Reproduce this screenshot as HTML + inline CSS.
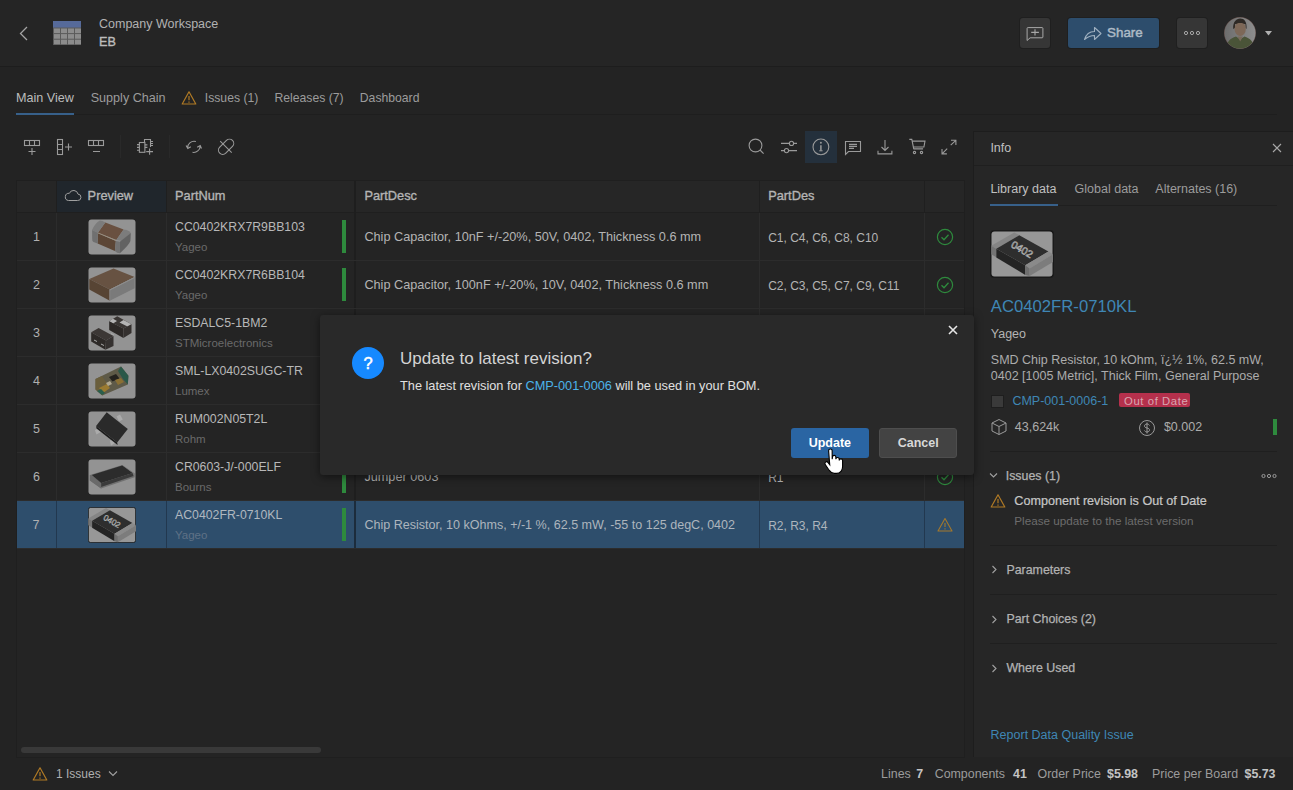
<!DOCTYPE html>
<html><head><meta charset="utf-8"><style>
html,body{margin:0;padding:0;}
body{width:1293px;height:790px;position:relative;overflow:hidden;background:#232323;font-family:"Liberation Sans",sans-serif;}
.t{position:absolute;line-height:1;white-space:nowrap;}
.r{position:absolute;}
</style></head><body>
<div class="r" style="left:0px;top:0px;width:1293px;height:66px;background:#252525;"></div>
<div class="r" style="left:0px;top:66px;width:1293px;height:1px;background:#1d1d1d;"></div>
<svg class="r" style="left:18px;top:25px" width="12" height="17"><polyline points="9,2 2.5,8.5 9,15" fill="none" stroke="#a4a4a4" stroke-width="1.3"/></svg>
<svg class="r" style="left:53px;top:21px" width="28" height="24"><rect x="0" y="0" width="28" height="24" fill="#5a5a5a"/><rect x="0" y="0" width="28" height="6.5" fill="#566a9a"/><rect x="1" y="7.5" width="6" height="4.6" fill="#8c8c8c"/><rect x="1" y="13.1" width="6" height="4.6" fill="#8c8c8c"/><rect x="1" y="18.7" width="6" height="4.6" fill="#8c8c8c"/><rect x="8" y="7.5" width="6" height="4.6" fill="#8c8c8c"/><rect x="8" y="13.1" width="6" height="4.6" fill="#8c8c8c"/><rect x="8" y="18.7" width="6" height="4.6" fill="#8c8c8c"/><rect x="15" y="7.5" width="6" height="4.6" fill="#8c8c8c"/><rect x="15" y="13.1" width="6" height="4.6" fill="#8c8c8c"/><rect x="15" y="18.7" width="6" height="4.6" fill="#8c8c8c"/><rect x="22" y="7.5" width="6" height="4.6" fill="#8c8c8c"/><rect x="22" y="13.1" width="6" height="4.6" fill="#8c8c8c"/><rect x="22" y="18.7" width="6" height="4.6" fill="#8c8c8c"/></svg>
<div class="t " style="left:99px;top:18.42px;font-size:12.5px;color:#b2b2b2;font-weight:normal;">Company Workspace</div>
<div class="t " style="left:99px;top:36.33px;font-size:12.6px;color:#bcbcbc;font-weight:normal;-webkit-text-stroke:0.4px #bcbcbc;">EB</div>
<div class="r" style="left:1020px;top:18px;width:30px;height:30px;background:#363636;border-radius:3px;box-shadow:0 0 0 1px #1f1f1f;"></div>
<svg class="r" style="left:1020px;top:18px" width="30" height="30"><path d="M8.1 9.6h14a0.8 0.8 0 0 1 0.8 0.8v8.6a0.8 0.8 0 0 1-0.8 0.8h-12l-3 2.7v-12.1a0.8 0.8 0 0 1 0.8-0.8z" fill="none" stroke="#a8a8a8" stroke-width="1"/><path d="M15 11.3v6.3M11.2 14.4h7.7" stroke="#a8a8a8" stroke-width="1.1"/></svg>
<div class="r" style="left:1068px;top:18px;width:91px;height:30px;background:#2d4d6c;border-radius:3px;box-shadow:0 0 0 1px #1f1f1f;"></div>
<svg class="r" style="left:1082px;top:22px" width="22" height="22"><path d="M2.5 17.5c1.5-5 5-8 10-8v-4l6.5 6-6.5 6v-4c-4 0-7 1.5-10 4z" fill="none" stroke="#9fb0c0" stroke-width="1.1" stroke-linejoin="round"/></svg>
<div class="t " style="left:1107px;top:25.86px;font-size:13.4px;color:#aebbc6;font-weight:normal;-webkit-text-stroke:0.45px #aebbc6;">Share</div>
<div class="r" style="left:1177px;top:18px;width:30px;height:30px;background:#363636;border-radius:3px;box-shadow:0 0 0 1px #1f1f1f;"></div>
<svg class="r" style="left:1177px;top:18px" width="30" height="30"><circle cx="9" cy="15" r="1.6" fill="none" stroke="#a8a8a8" stroke-width="1"/><circle cx="15" cy="15" r="1.6" fill="none" stroke="#a8a8a8" stroke-width="1"/><circle cx="21" cy="15" r="1.6" fill="none" stroke="#a8a8a8" stroke-width="1"/></svg>
<svg class="r" style="left:1224px;top:17px" width="32" height="32"><defs><linearGradient id="av" x1="0" y1="0" x2="1" y2="0"><stop offset="0" stop-color="#6c6c6c"/><stop offset="1" stop-color="#8e8e8e"/></linearGradient><clipPath id="avc"><circle cx="16" cy="16" r="15.5"/></clipPath></defs><circle cx="16" cy="16" r="16" fill="#5e4a46"/><g clip-path="url(#avc)"><rect width="32" height="32" fill="url(#av)"/><path d="M9.2 12c-0.5-7 3-10.5 7-10.5s7 3 6.3 10.5l-1-1v-4h-10.5v4z" fill="#2e2a26"/><ellipse cx="16.2" cy="11.9" rx="5.6" ry="7.2" fill="#7d6858"/><path d="M10.8 7.5c1-3 3-4 5.4-4s4.6 1 5.4 4c-1.5-1-3-1.5-5.4-1.5s-4 0.5-5.4 1.5z" fill="#2e2a26"/><path d="M2 33c0-7 4-12 10-13.5l4.2 3 4.2-3c6 1.5 10 6.5 10 13.5z" fill="#4a5438"/><path d="M13.5 19.5l2.7 5 2.7-5z" fill="#7a6a5a"/></g></svg>
<svg class="r" style="left:1265px;top:31px" width="8" height="5"><path d="M0 0h7l-3.5 4.5z" fill="#b0b0b0"/></svg>
<div class="r" style="left:16px;top:114px;width:1261px;height:1px;background:#1e1e1e;"></div>
<div class="t " style="left:16px;top:92.33px;font-size:12.6px;color:#bcbcbc;font-weight:normal;">Main View</div>
<div class="r" style="left:16px;top:113px;width:58px;height:2px;background:#37608a;"></div>
<div class="t " style="left:90.7px;top:92.33px;font-size:12.6px;color:#9c9c9c;font-weight:normal;">Supply Chain</div>
<svg class="r" style="left:181px;top:90px" width="16" height="16"><path d="M8 1.8L14.8 14H1.2z" fill="none" stroke="#b07a25" stroke-width="1.2" stroke-linejoin="round"/><path d="M8 6v4.2M8 11.5v1.2" stroke="#b07a25" stroke-width="1.2"/></svg>
<div class="t " style="left:204.8px;top:91.87px;font-size:12.2px;color:#9c9c9c;font-weight:normal;">Issues (1)</div>
<div class="t " style="left:274.5px;top:91.87px;font-size:12.2px;color:#9c9c9c;font-weight:normal;">Releases (7)</div>
<div class="t " style="left:359.8px;top:91.87px;font-size:12.2px;color:#9c9c9c;font-weight:normal;">Dashboard</div>
<svg class="r" style="left:0;top:130px" width="260" height="34" fill="none" stroke="#9a9a9a" stroke-width="1.1"><rect x="24.5" y="10.5" width="15" height="5"/><path d="M29.5 10.5v5M34.5 10.5v5M32 18v7M28.5 21.5h7"/><rect x="57.5" y="9.5" width="5" height="15"/><path d="M57.5 14.5h5M57.5 19.5h5M65 17h7M68.5 13.5v7"/><rect x="88.5" y="10.5" width="15" height="5"/><path d="M93.5 10.5v5M98.5 10.5v5M93 21.5h7"/><path d="M120.5 5v23M169.5 5v23" stroke="#292929"/><path d="M144.5 12.5v-3h6v7.5M150.5 11.5h2.5M150.5 13.5h2.5M150.5 15.5h2.5"/><rect x="139.4" y="12.5" width="5.5" height="9.8"/><path d="M137 14.6h2.4M137 17.4h2.4M137 20.2h2.4M144.9 14.9h2.5M144.9 17.4h2.5M146.2 21.6h6.8M149.6 18.5v6.3"/><path d="M195.9 11.5a6.5 6.5 0 0 0-8.3 6.5M186.1 15.5l1.7 3 3-1.7M192.5 22.3a6.5 6.5 0 0 0 7.7-6.3M197.2 17.2l3-1.7 1.3 3"/><rect x="217.1" y="12.55" width="18" height="8.5" rx="4.25" transform="rotate(-45 226.1 16.8)"/><path d="M220.2 11.2l11.5 11.5"/></svg>
<div class="r" style="left:805px;top:131px;width:32px;height:32px;background:#24303c;"></div>
<svg class="r" style="left:740px;top:130px" width="222" height="34" fill="none" stroke="#9a9a9a" stroke-width="1.1"><circle cx="15.5" cy="15.5" r="6.4"/><path d="M20 20l3.6 3.6"/><path d="M41 13.4h16M41 20.6h16"/><circle cx="51.5" cy="13.4" r="2.1" fill="#232323"/><circle cx="46.5" cy="20.6" r="2.1" fill="#232323"/><circle cx="80.9" cy="16.9" r="7.9"/><path d="M80.9 15.2v5.6" stroke-width="1.5"/><path d="M79.2 20.8h3.4" stroke-width="1"/><circle cx="80.9" cy="12.7" r="0.95" fill="#9a9a9a" stroke="none"/><path d="M105.5 11.5h15v10h-12l-3 3z"/><path d="M109 14.4h8M109 16.4h8M109 18.4h5"/><path d="M145 10v10.2M141.5 17l3.5 3.4 3.5-3.4M138 20.8v3.1h13.9v-3.1"/><path d="M169.3 9.4h2.5l1.9 9.3h9.4M172.2 11.1h12.8l-1.1 5.9h-10.7M173.6 19h9.3"/><circle cx="174.5" cy="22.5" r="1.15"/><circle cx="181.5" cy="22.5" r="1.15"/><path d="M210.7 15.2l5.2-4.9M211 10.3h4.9v4.6M207.2 18.7l-5.2 5.2M202 19v4.9h4.9"/></svg>
<div class="r" style="left:16px;top:180px;width:949px;height:578px;background:#242424;box-sizing:border-box;border:1px solid #1f1f1f;"></div>
<div class="r" style="left:17px;top:181px;width:947px;height:31px;background:#262626;"></div>
<div class="r" style="left:57px;top:181px;width:109px;height:31px;background:#20262c;"></div>
<div class="r" style="left:17px;top:212px;width:947px;height:1px;background:#1f1f1f;"></div>
<div class="r" style="left:56px;top:181px;width:1px;height:31px;background:#1f1f1f;"></div>
<div class="r" style="left:56px;top:213px;width:1px;height:335px;background:#2c2c2c;"></div>
<div class="r" style="left:166px;top:181px;width:1px;height:31px;background:#1f1f1f;"></div>
<div class="r" style="left:166px;top:213px;width:1px;height:335px;background:#2c2c2c;"></div>
<div class="r" style="left:759px;top:181px;width:1px;height:31px;background:#1f1f1f;"></div>
<div class="r" style="left:759px;top:213px;width:1px;height:335px;background:#2c2c2c;"></div>
<div class="r" style="left:924px;top:181px;width:1px;height:31px;background:#1f1f1f;"></div>
<div class="r" style="left:924px;top:213px;width:1px;height:335px;background:#2c2c2c;"></div>
<div class="r" style="left:354px;top:181px;width:2px;height:367px;background:#1e1e1e;"></div>
<svg class="r" style="left:64px;top:188px" width="18" height="14"><path d="M4.5 12.5h9a3.2 3.2 0 0 0 0.5-6.4a4.5 4.5 0 0 0-8.6-0.8a3.2 3.2 0 0 0-0.9 7.2z" fill="none" stroke="#a0a0a0" stroke-width="1"/></svg>
<div class="t " style="left:87.6px;top:190.16px;font-size:12.8px;color:#b4b4b4;font-weight:normal;-webkit-text-stroke:0.35px #b4b4b4;">Preview</div>
<div class="t " style="left:175px;top:190.16px;font-size:12.8px;color:#b4b4b4;font-weight:normal;-webkit-text-stroke:0.35px #b4b4b4;">PartNum</div>
<div class="t " style="left:364.4px;top:190.16px;font-size:12.8px;color:#b4b4b4;font-weight:normal;-webkit-text-stroke:0.35px #b4b4b4;">PartDesc</div>
<div class="t " style="left:768.2px;top:190.16px;font-size:12.8px;color:#b4b4b4;font-weight:normal;-webkit-text-stroke:0.35px #b4b4b4;">PartDes</div>
<div class="r" style="left:17px;top:260px;width:947px;height:1px;background:#2c2c2c;"></div>
<div class="t " style="left:33px;top:231.32px;font-size:12.5px;color:#b0b0b0;font-weight:normal;">1</div>
<svg class="r" style="left:88px;top:219px" width="48" height="36" viewBox="0 0 48 36"><rect x="0.5" y="0.5" width="47" height="35" rx="3" fill="#939393" /><path d="M17.3 3.6L35.6 10.5 28.3 21 9.8 13.7z" fill="#695040"/><path d="M9.8 14.1L27.8 21.9 26.9 31.9 9.6 24.6z" fill="#5c4636"/><path d="M9.8 13.9L28 21.4" stroke="#9a9080" stroke-width="0.9"/><path d="M11.9 1.4Q14.5 1.5 17.3 3.6L9.8 13.7 4.1 10.9Q7 4 11.9 1.4z" fill="#7c7c7c"/><path d="M4.1 10.9L9.8 13.7 9.6 24.6 5.5 23Q4 22.5 4.2 20z" fill="#707070"/><path d="M35.6 10.5L38.7 10.9Q41.5 12 42.8 14.1L34.2 21.9 28.3 21z" fill="#7c7c7c"/><path d="M27.8 21.9L31.9 22.8 31.9 34.2Q29 34 26.9 31.9z" fill="#727272"/><path d="M31.9 22.8L42.8 14.1 42.4 22Q41 26 31.9 34.2z" fill="#626262"/></svg>
<div class="t " style="left:175px;top:221.39px;font-size:12.3px;color:#b8b8b8;font-weight:normal;">CC0402KRX7R9BB103</div>
<div class="t " style="left:175px;top:241.97px;font-size:11.5px;color:#6a6a6a;font-weight:normal;">Yageo</div>
<div class="r" style="left:342px;top:220px;width:4px;height:33px;background:#2e8a3d;"></div>
<div class="t " style="left:364.4px;top:231.25px;font-size:12.7px;color:#b4b4b4;font-weight:normal;">Chip Capacitor, 10nF +/-20%, 50V, 0402, Thickness 0.6 mm</div>
<div class="t " style="left:768.2px;top:231.84px;font-size:12.0px;color:#b4b4b4;font-weight:normal;">C1, C4, C6, C8, C10</div>
<svg class="r" style="left:936px;top:228px" width="18" height="18"><circle cx="9" cy="9" r="7.6" fill="none" stroke="#2e8a3d" stroke-width="1.2"/><path d="M5.5 9.2l2.5 2.5 4.5-5" fill="none" stroke="#2e8a3d" stroke-width="1.3"/></svg>
<div class="r" style="left:17px;top:308px;width:947px;height:1px;background:#2c2c2c;"></div>
<div class="t " style="left:33px;top:279.32px;font-size:12.5px;color:#b0b0b0;font-weight:normal;">2</div>
<svg class="r" style="left:88px;top:267px" width="48" height="36" viewBox="0 0 48 36"><rect x="0.5" y="0.5" width="47" height="35" rx="3" fill="#939393" /><path d="M1.3 12L25.5 1.5 46.6 10.1 21.8 22.5z" fill="#675242"/><path d="M1.3 12L21.8 22.5 21.8 33.7 1.3 22.5z" fill="#574434"/><path d="M21.8 22.5L46.6 10.1 46.6 21.3 21.8 33.7z" fill="#7a7a7a"/><path d="M21.8 22.5L46.6 10.1 46.6 11.1 21.8 23.5z" fill="#909090"/><path d="M21.8 22.5v11.2" stroke="#8e8e8e" stroke-width="0.8"/></svg>
<div class="t " style="left:175px;top:269.39px;font-size:12.3px;color:#b8b8b8;font-weight:normal;">CC0402KRX7R6BB104</div>
<div class="t " style="left:175px;top:289.97px;font-size:11.5px;color:#6a6a6a;font-weight:normal;">Yageo</div>
<div class="r" style="left:342px;top:268px;width:4px;height:33px;background:#2e8a3d;"></div>
<div class="t " style="left:364.4px;top:279.25px;font-size:12.7px;color:#b4b4b4;font-weight:normal;">Chip Capacitor, 100nF +/-20%, 10V, 0402, Thickness 0.6 mm</div>
<div class="t " style="left:768.2px;top:279.84px;font-size:12.0px;color:#b4b4b4;font-weight:normal;">C2, C3, C5, C7, C9, C11</div>
<svg class="r" style="left:936px;top:276px" width="18" height="18"><circle cx="9" cy="9" r="7.6" fill="none" stroke="#2e8a3d" stroke-width="1.2"/><path d="M5.5 9.2l2.5 2.5 4.5-5" fill="none" stroke="#2e8a3d" stroke-width="1.3"/></svg>
<div class="r" style="left:17px;top:356px;width:947px;height:1px;background:#2c2c2c;"></div>
<div class="t " style="left:33px;top:327.32px;font-size:12.5px;color:#b0b0b0;font-weight:normal;">3</div>
<svg class="r" style="left:88px;top:315px" width="48" height="36" viewBox="0 0 48 36"><rect x="0.5" y="0.5" width="47" height="35" rx="3" fill="#939393" /><path d="M3.2 17.3L10.6 13 25.5 21 18 25.4z" fill="#3c3735"/><path d="M3.2 17.3L18 25.4 17.4 34.7 3.2 26.6z" fill="#2e2a28"/><path d="M18 25.4L25.5 21 25.5 31 17.4 34.7z" fill="#353130"/><path d="M21.2 6.2L29.2 1.2 43.5 9.3 35.4 13.6z" fill="#3a3634"/><path d="M21.2 6.2L25 3.8 29 6 25 8.4z M31.5 7.5L35.5 5 43.5 9.3 39.5 11.5z" fill="#b4b4b4"/><path d="M21.2 6.2L35.4 13.6 35.4 22.9 21.2 14.9z" fill="#2c2826"/><path d="M35.4 13.6L43.5 9.3 43.5 18 35.4 22.9z" fill="#34302e"/><path d="M6 25l3 1.5M13 29l3 1.5M23 18.5l3 1.5" stroke="#aaa" stroke-width="1"/></svg>
<div class="t " style="left:175px;top:317.39px;font-size:12.3px;color:#b8b8b8;font-weight:normal;">ESDALC5-1BM2</div>
<div class="t " style="left:175px;top:337.97px;font-size:11.5px;color:#6a6a6a;font-weight:normal;">STMicroelectronics</div>
<div class="r" style="left:342px;top:316px;width:4px;height:33px;background:#2e8a3d;"></div>
<div class="r" style="left:17px;top:404px;width:947px;height:1px;background:#2c2c2c;"></div>
<div class="t " style="left:33px;top:375.32px;font-size:12.5px;color:#b0b0b0;font-weight:normal;">4</div>
<svg class="r" style="left:88px;top:363px" width="48" height="36" viewBox="0 0 48 36"><rect x="0.5" y="0.5" width="47" height="35" rx="3" fill="#939393" /><path d="M7.5 15.9L33 3.5 40.4 12.8 39.8 21.4 14.3 32.6 7.5 26.4z" fill="#5e5a48"/><path d="M7.5 15.9L14 13 20 22 14.3 32.6 7.5 26.4z" fill="#6a5e3c"/><path d="M33 3.5L40.4 12.8 39.8 21.4 35 16 30 8z" fill="#2a5848"/><path d="M21 14l7-3 3.5 4.5-7 3z" fill="#24221e"/><path d="M11 25l8-4 3 4-7 5z" fill="#9a7a30"/><path d="M27 17l6-2 3 4-6 3z" fill="#8a7034"/><path d="M9 28l5 4 3-2-4-4z" fill="#2a5e4c"/><path d="M18 20l4-2 2 3-4 2z" fill="#b0a890"/></svg>
<div class="t " style="left:175px;top:365.39px;font-size:12.3px;color:#b8b8b8;font-weight:normal;">SML-LX0402SUGC-TR</div>
<div class="t " style="left:175px;top:385.97px;font-size:11.5px;color:#6a6a6a;font-weight:normal;">Lumex</div>
<div class="r" style="left:342px;top:364px;width:4px;height:33px;background:#2e8a3d;"></div>
<div class="r" style="left:17px;top:452px;width:947px;height:1px;background:#2c2c2c;"></div>
<div class="t " style="left:33px;top:423.32px;font-size:12.5px;color:#b0b0b0;font-weight:normal;">5</div>
<svg class="r" style="left:88px;top:411px" width="48" height="36" viewBox="0 0 48 36"><rect x="0.5" y="0.5" width="47" height="35" rx="3" fill="#939393" /><path d="M6.9 19.2L11.9 16.5 13.5 20.5 8.5 23.5z M21.8 29.7L26 27 27.4 31.5 23 34.7z M28.6 5.5L32 3.5 34.8 8.5 31 10.5z" fill="#ababab"/><path d="M8.1 14.9L18.7 1.2 39.8 18 29.2 31.6z" fill="#2a2a2a"/><path d="M8.1 14.9L29.2 31.6 29.6 34 8.5 17.5z" fill="#1c1c1c"/></svg>
<div class="t " style="left:175px;top:413.39px;font-size:12.3px;color:#b8b8b8;font-weight:normal;">RUM002N05T2L</div>
<div class="t " style="left:175px;top:433.97px;font-size:11.5px;color:#6a6a6a;font-weight:normal;">Rohm</div>
<div class="r" style="left:342px;top:412px;width:4px;height:33px;background:#2e8a3d;"></div>
<div class="r" style="left:17px;top:500px;width:947px;height:1px;background:#2c2c2c;"></div>
<div class="t " style="left:33px;top:471.32px;font-size:12.5px;color:#b0b0b0;font-weight:normal;">6</div>
<svg class="r" style="left:88px;top:459px" width="48" height="36" viewBox="0 0 48 36"><rect x="0.5" y="0.5" width="47" height="35" rx="3" fill="#939393" /><path d="M1.9 15.9L34.2 5.9 46.6 14.6 46.6 18.3 13.1 29.5 1.9 21.4z" fill="#707070"/><path d="M3.8 15.9L34.2 6.6 44.7 14 13.1 23.9z" fill="#2c2c2c"/><path d="M3.8 15.9L13.1 23.9 13.1 28 3 20z" fill="#222"/><path d="M13.1 23.9L44.7 14 45.5 17 13.1 28z" fill="#3a3a3a"/><path d="M1.9 15.9L3.8 15.9 13.1 23.9 13.1 29.5 1.9 21.4z" fill="#6a6a6a"/><path d="M34.2 5.9L46.6 14.6 46.6 18.3 44.7 14z" fill="#7a7a7a"/></svg>
<div class="t " style="left:175px;top:461.39px;font-size:12.3px;color:#b8b8b8;font-weight:normal;">CR0603-J/-000ELF</div>
<div class="t " style="left:175px;top:481.97px;font-size:11.5px;color:#6a6a6a;font-weight:normal;">Bourns</div>
<div class="r" style="left:342px;top:460px;width:4px;height:33px;background:#2e8a3d;"></div>
<div class="t " style="left:364.4px;top:471.25px;font-size:12.7px;color:#b4b4b4;font-weight:normal;">Jumper 0603</div>
<div class="t " style="left:768.2px;top:471.84px;font-size:12.0px;color:#b4b4b4;font-weight:normal;">R1</div>
<svg class="r" style="left:936px;top:468px" width="18" height="18"><circle cx="9" cy="9" r="7.6" fill="none" stroke="#2e8a3d" stroke-width="1.2"/><path d="M5.5 9.2l2.5 2.5 4.5-5" fill="none" stroke="#2e8a3d" stroke-width="1.3"/></svg>
<div class="r" style="left:17px;top:501px;width:947px;height:47px;background:#2e4e6c;"></div>
<div class="r" style="left:56px;top:501px;width:1px;height:47px;background:#22384f;"></div>
<div class="r" style="left:166px;top:501px;width:1px;height:47px;background:#22384f;"></div>
<div class="r" style="left:759px;top:501px;width:1px;height:47px;background:#22384f;"></div>
<div class="r" style="left:924px;top:501px;width:1px;height:47px;background:#22384f;"></div>
<div class="r" style="left:354px;top:501px;width:2px;height:47px;background:#1c2c3c;"></div>
<div class="r" style="left:17px;top:548px;width:947px;height:1px;background:#2c2c2c;"></div>
<div class="t " style="left:32.5px;top:519.32px;font-size:12.5px;color:#b0b0b0;font-weight:normal;">7</div>
<svg class="r" style="left:88px;top:507px" width="48" height="36" viewBox="0 0 62 46" preserveAspectRatio="none"><rect x="0.5" y="0.5" width="61" height="45" rx="3" fill="#979797" stroke="#141414" stroke-width="1"/><path d="M0.3 14.8L23.3 1.4 28.3 4.2 5.3 17.7z" fill="#858585"/><path d="M0.3 14.8L5.3 17.7 5.3 26.2 0.3 23.3z" fill="#747474"/><path d="M5.3 17.7L28.3 4.2 57.4 20.5 34.3 34.3z" fill="#2e2e2e"/><path d="M5.3 17.7L34.3 34.3 34.3 43.9 5.3 26.5z" fill="#242424"/><path d="M34.3 34.3L57.4 20.5 62 23.3 38.6 37.5z" fill="#8a8a8a"/><path d="M34.3 34.3L38.6 37.5 38.6 45 34.3 43.9z" fill="#6e6e6e"/><path d="M38.6 37.5L62 23.3 62 31.1 38.6 45z" fill="#7c7c7c"/><text x="31" y="22" font-size="10.5" fill="none" stroke="#c4c4c4" stroke-width="0.55" font-family="Liberation Sans" transform="rotate(30 31 18.5)" text-anchor="middle">0402</text></svg>
<div class="t " style="left:175px;top:509.39px;font-size:12.3px;color:#b0b8c0;font-weight:normal;">AC0402FR-0710KL</div>
<div class="t " style="left:175px;top:529.97px;font-size:11.5px;color:#5e7186;font-weight:normal;">Yageo</div>
<div class="r" style="left:342px;top:508px;width:4px;height:33px;background:#2e8a3d;"></div>
<div class="t " style="left:364.4px;top:519.38px;font-size:12.55px;color:#adb5bd;font-weight:normal;">Chip Resistor, 10 kOhms, +/-1 %, 62.5 mW, -55 to 125 degC, 0402</div>
<div class="t " style="left:768.2px;top:519.84px;font-size:12.0px;color:#adb5bd;font-weight:normal;">R2, R3, R4</div>
<svg class="r" style="left:936px;top:516px" width="18" height="18"><path d="M9 2.5L16 15H2z" fill="none" stroke="#a4782c" stroke-width="1.1" stroke-linejoin="round"/><path d="M9 7v4M9 12.3v1.2" stroke="#a4782c" stroke-width="1.1"/></svg>
<div class="r" style="left:21px;top:747px;width:300px;height:6px;background:#393939;border-radius:3px;"></div>
<div class="r" style="left:973px;top:131px;width:320px;height:626px;background:#262626;box-sizing:border-box;border-left:1px solid #1d1d1d;border-top:1px solid #1d1d1d;"></div>
<div class="t " style="left:990.4px;top:142.42px;font-size:12.5px;color:#c0c0c0;font-weight:normal;">Info</div>
<svg class="r" style="left:1272px;top:143px" width="10" height="10"><path d="M1 1l8 8M9 1l-8 8" stroke="#a8a8a8" stroke-width="1.1"/></svg>
<div class="r" style="left:974px;top:165px;width:319px;height:1px;background:#1f1f1f;"></div>
<div class="r" style="left:990px;top:205px;width:287px;height:1px;background:#1f1f1f;"></div>
<div class="t " style="left:990.4px;top:183.12px;font-size:12.5px;color:#c0c0c0;font-weight:normal;">Library data</div>
<div class="t " style="left:1074.6px;top:183.12px;font-size:12.5px;color:#9c9c9c;font-weight:normal;">Global data</div>
<div class="t " style="left:1155.3px;top:183.12px;font-size:12.5px;color:#9c9c9c;font-weight:normal;">Alternates (16)</div>
<div class="r" style="left:990px;top:204px;width:68px;height:2px;background:#37608a;"></div>
<div class="r" style="left:990px;top:230px;width:64px;height:48px;background:#1a1a1a;border-radius:4px;"></div>
<svg class="r" style="left:991px;top:231px" width="62" height="46" viewBox="0 0 62 46" preserveAspectRatio="none"><rect x="0.5" y="0.5" width="61" height="45" rx="3" fill="#979797" /><path d="M0.3 14.8L23.3 1.4 28.3 4.2 5.3 17.7z" fill="#858585"/><path d="M0.3 14.8L5.3 17.7 5.3 26.2 0.3 23.3z" fill="#747474"/><path d="M5.3 17.7L28.3 4.2 57.4 20.5 34.3 34.3z" fill="#2e2e2e"/><path d="M5.3 17.7L34.3 34.3 34.3 43.9 5.3 26.5z" fill="#242424"/><path d="M34.3 34.3L57.4 20.5 62 23.3 38.6 37.5z" fill="#8a8a8a"/><path d="M34.3 34.3L38.6 37.5 38.6 45 34.3 43.9z" fill="#6e6e6e"/><path d="M38.6 37.5L62 23.3 62 31.1 38.6 45z" fill="#7c7c7c"/><text x="31" y="22" font-size="10.5" fill="none" stroke="#c4c4c4" stroke-width="0.55" font-family="Liberation Sans" transform="rotate(30 31 18.5)" text-anchor="middle">0402</text></svg>
<div class="t " style="left:990.8px;top:299.16px;font-size:16.7px;color:#3f86b5;font-weight:normal;">AC0402FR-0710KL</div>
<div class="t " style="left:990.8px;top:328.32px;font-size:12.5px;color:#b4b4b4;font-weight:normal;">Yageo</div>
<div class="t " style="left:990.8px;top:354.02px;font-size:12.5px;color:#acacac;font-weight:normal;">SMD Chip Resistor, 10 kOhm, ï¿½ 1%, 62.5 mW,</div>
<div class="t " style="left:990.8px;top:369.92px;font-size:12.5px;color:#acacac;font-weight:normal;">0402 [1005 Metric], Thick Film, General Purpose</div>
<div class="r" style="left:991px;top:395px;width:13px;height:13px;background:#3a3a3a;box-sizing:border-box;border:1px solid #1e1e1e;"></div>
<div class="t " style="left:1012.4px;top:395.42px;font-size:12.5px;color:#3f86b5;font-weight:normal;">CMP-001-0006-1</div>
<div class="r" style="left:1119px;top:393px;width:71px;height:14px;background:#b5304c;border-radius:2px;"></div>
<div class="t " style="left:1124px;top:395.93px;font-size:11.3px;color:#d8a6b0;font-weight:normal;letter-spacing:0.6px;">Out of Date</div>
<svg class="r" style="left:990px;top:418px" width="18" height="18" fill="none" stroke="#9a9a9a" stroke-width="1"><path d="M9 1.5l7 3.5v8l-7 3.5-7-3.5v-8z M2 5l7 3.5 7-3.5 M9 8.5v8"/></svg>
<div class="t " style="left:1014.8px;top:421.22px;font-size:12.5px;color:#acacac;font-weight:normal;">43,624k</div>
<svg class="r" style="left:1138px;top:419px" width="18" height="18" fill="none" stroke="#9a9a9a" stroke-width="1"><circle cx="9" cy="9" r="7.5"/><path d="M11.5 6.5c-0.5-1-1.5-1.5-2.5-1.5c-1.5 0-2.5 0.8-2.5 2s1 1.7 2.5 2s2.5 0.8 2.5 2s-1 2-2.5 2c-1 0-2-0.5-2.5-1.5M9 3.5v11"/></svg>
<div class="t " style="left:1163.9px;top:421.22px;font-size:12.5px;color:#acacac;font-weight:normal;">$0.002</div>
<div class="r" style="left:1273px;top:419px;width:4px;height:16px;background:#2e8a3d;"></div>
<div class="r" style="left:990px;top:451px;width:287px;height:1px;background:#1f1f1f;"></div>
<svg class="r" style="left:989px;top:472px" width="10" height="7"><path d="M1 1.5l3.5 3.5 3.5-3.5" fill="none" stroke="#a0a0a0" stroke-width="1.1"/></svg>
<div class="t " style="left:1005.7px;top:469.70px;font-size:12.4px;color:#b2b2b2;font-weight:normal;-webkit-text-stroke:0.25px #b2b2b2;">Issues (1)</div>
<svg class="r" style="left:1260px;top:472px" width="18" height="8" fill="none" stroke="#9a9a9a" stroke-width="1"><circle cx="3.5" cy="4" r="1.6"/><circle cx="9" cy="4" r="1.6"/><circle cx="14.5" cy="4" r="1.6"/></svg>
<svg class="r" style="left:990px;top:493px" width="16" height="16"><path d="M8 1.8L14.8 14H1.2z" fill="none" stroke="#b07a25" stroke-width="1.2" stroke-linejoin="round"/><path d="M8 6v4.2M8 11.5v1.2" stroke="#b07a25" stroke-width="1.2"/></svg>
<div class="t " style="left:1014.3px;top:495.13px;font-size:12.6px;color:#c6c6c6;font-weight:normal;-webkit-text-stroke:0.22px #c6c6c6;">Component revision is Out of Date</div>
<div class="t " style="left:1014.3px;top:515.30px;font-size:11.7px;color:#6c6c6c;font-weight:normal;">Please update to the latest version</div>
<div class="r" style="left:990px;top:545px;width:287px;height:1px;background:#1f1f1f;"></div>
<svg class="r" style="left:990px;top:564.3px" width="8" height="11"><path d="M2.5 2l3.5 3.5-3.5 3.5" fill="none" stroke="#a0a0a0" stroke-width="1.1"/></svg>
<div class="t " style="left:1006.4px;top:563.90px;font-size:12.4px;color:#b2b2b2;font-weight:normal;-webkit-text-stroke:0.25px #b2b2b2;">Parameters</div>
<div class="r" style="left:990px;top:594px;width:287px;height:1px;background:#1f1f1f;"></div>
<svg class="r" style="left:990px;top:613.5px" width="8" height="11"><path d="M2.5 2l3.5 3.5-3.5 3.5" fill="none" stroke="#a0a0a0" stroke-width="1.1"/></svg>
<div class="t " style="left:1006.4px;top:613.10px;font-size:12.4px;color:#b2b2b2;font-weight:normal;-webkit-text-stroke:0.25px #b2b2b2;">Part Choices (2)</div>
<div class="r" style="left:990px;top:643px;width:287px;height:1px;background:#1f1f1f;"></div>
<svg class="r" style="left:990px;top:662.5px" width="8" height="11"><path d="M2.5 2l3.5 3.5-3.5 3.5" fill="none" stroke="#a0a0a0" stroke-width="1.1"/></svg>
<div class="t " style="left:1006.4px;top:662.10px;font-size:12.4px;color:#b2b2b2;font-weight:normal;-webkit-text-stroke:0.25px #b2b2b2;">Where Used</div>
<div class="t " style="left:990.6px;top:729.02px;font-size:12.5px;color:#3f86b5;font-weight:normal;">Report Data Quality Issue</div>
<div class="r" style="left:0px;top:758px;width:1293px;height:32px;background:#232323;"></div>
<svg class="r" style="left:32px;top:766px" width="16" height="16"><path d="M8 1.8L14.8 14H1.2z" fill="none" stroke="#b07a25" stroke-width="1.2" stroke-linejoin="round"/><path d="M8 6v4.2M8 11.5v1.2" stroke="#b07a25" stroke-width="1.2"/></svg>
<div class="t " style="left:56px;top:768.04px;font-size:12.0px;color:#b0b0b0;font-weight:normal;">1 Issues</div>
<svg class="r" style="left:108px;top:770px" width="10" height="7"><path d="M1 1.5l4 4 4-4" fill="none" stroke="#a0a0a0" stroke-width="1.1"/></svg>
<div class="t " style="left:881.1px;top:768.40px;font-size:12.4px;color:#9c9c9c;font-weight:normal;">Lines</div>
<div class="t " style="left:916.3px;top:768.40px;font-size:12.4px;color:#c4c4c4;font-weight:bold;">7</div>
<div class="t " style="left:934.7px;top:768.40px;font-size:12.4px;color:#9c9c9c;font-weight:normal;">Components</div>
<div class="t " style="left:1013px;top:768.40px;font-size:12.4px;color:#c4c4c4;font-weight:bold;">41</div>
<div class="t " style="left:1037.5px;top:768.40px;font-size:12.4px;color:#9c9c9c;font-weight:normal;">Order Price</div>
<div class="t " style="left:1107px;top:768.40px;font-size:12.4px;color:#c4c4c4;font-weight:bold;">$5.98</div>
<div class="t " style="left:1152px;top:768.40px;font-size:12.4px;color:#9c9c9c;font-weight:normal;">Price per Board</div>
<div class="t " style="left:1244.5px;top:768.40px;font-size:12.4px;color:#c4c4c4;font-weight:bold;">$5.73</div>
<div class="r" style="left:320px;top:315px;width:654px;height:160px;background:#292929;border-radius:3px;box-shadow:0 2px 9px rgba(0,0,0,0.5);"></div>
<svg class="r" style="left:352px;top:347px" width="32" height="32"><circle cx="16" cy="16" r="16" fill="#1689ff"/></svg>
<div class="t " style="left:363.6px;top:355.23px;font-size:16.5px;color:#ffffff;font-weight:normal;-webkit-text-stroke:0.5px #fff;">?</div>
<div class="t " style="left:400px;top:350.31px;font-size:17px;color:#d4d4d4;font-weight:normal;">Update to latest revision?</div>
<div class="t " style="left:400px;top:380.31px;font-size:12.75px;color:#e0e0e0;font-weight:normal;">The latest revision for <span style="color:#4cb3ea">CMP-001-0006</span> will be used in your BOM.</div>
<svg class="r" style="left:948px;top:325px" width="10" height="10"><path d="M1 1l8 8M9 1l-8 8" stroke="#e6e6e6" stroke-width="1.6"/></svg>
<div class="r" style="left:791px;top:428px;width:78px;height:30px;background:#2a65a3;border-radius:3px;"></div>
<div class="r" style="left:879px;top:428px;width:78px;height:30px;background:#434343;border-radius:3px;box-sizing:border-box;border:1px solid #4e4e4e;"></div>
<div class="t " style="left:808.7px;top:436.72px;font-size:12.5px;color:#ffffff;font-weight:bold;">Update</div>
<div class="t " style="left:897.7px;top:436.72px;font-size:12.5px;color:#d8d8d8;font-weight:bold;">Cancel</div>
<svg class="r" style="left:822.6px;top:448.4px" width="22.4" height="29.1" viewBox="0 0 20 26"><path d="M5 2.5a1.6 1.6 0 0 1 3.2 0v7.5l0.3-2a1.5 1.5 0 0 1 3 0.2v1.8a1.5 1.5 0 0 1 3 0v1.2a1.5 1.5 0 0 1 3 0v5.5c0 3-2 6-5.5 6h-2c-2.5 0-3.5-1.5-5-3.5l-3-4.5a1.5 1.5 0 0 1 2.4-1.8l1.6 2z" fill="#ffffff" stroke="#000" stroke-width="1"/></svg>
</body></html>
